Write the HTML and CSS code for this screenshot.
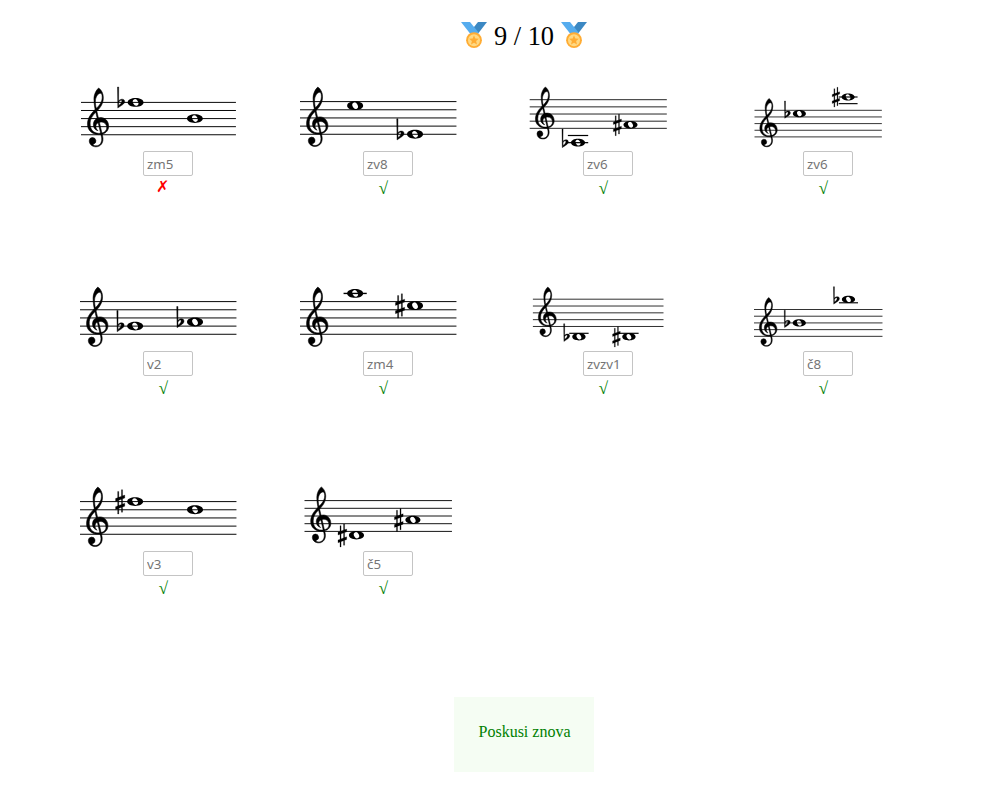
FILE: index.html
```html
<!DOCTYPE html>
<html lang="sr">
<head>
<meta charset="utf-8">
<title>Intervali</title>
<link rel="stylesheet" href="styles.css">
</head>
<body>
<svg class="defs" width="0" height="0" aria-hidden="true">
  <defs>
    <!-- One staff space is 10 units; the origin is the left end of the top line. -->
    <g id="staff">
      <path d="M0 0H191.5M0 10H191.5M0 20H191.5M0 30H191.5M0 40H191.5" fill="none" stroke="#000" stroke-width="1.2"/>
      <path transform="translate(0 -.5)" stroke="#000" stroke-width=".7" d="M21.8 -17.3C25.5 -15 27.6 -10 27.6 -5.5C27.6 3 23 8 18.8 12.2C14 17 11.3 21 11.3 27C11.3 34 15.5 38.8 22 38.8C28 38.8 31.8 36 31.8 31.8C31.8 27.5 29 24.8 25 24.8C21.2 24.8 18.8 26.8 18.4 29.5C18.1 31.8 19 33.6 21 35.5C17.5 34.6 15.3 31.8 15.3 28C15.3 23 19 19.2 24.5 19.2C30 19.2 34.2 24 34.2 30C34.2 36 29.5 40.3 22 40.3C14 40.3 8 35 8 27.5C8 19 13.5 13.5 18 8.8C23 4 26.2 0 26.2 -6C26.2 -9 25.4 -10.8 24 -10.8C21 -10.8 17.8 -6 17.8 -1C17.8 3 18.3 5 18.8 8L26.9 43C28.3 50 24.5 55.4 18.5 55.4C13.5 55.4 10.2 52 10.2 48A4.1 4.1 0 1 1 15.5 52C14.5 52.6 15 54.2 18.5 54.2C23.5 54.2 26.6 49.5 25.4 43.5L17.4 9C16.5 5 16 0 16 -4C16 -9 18.5 -14.5 21.8 -17.3Z"/>
    </g>
    <path id="note" fill-rule="evenodd" d="M-9.8 0C-9.8 -3.2 -5.3 -5.4 0 -5.4S9.8 -3.2 9.8 0S5.3 5.4 0 5.4S-9.8 3.2 -9.8 0ZM-2.1 -3.7A4.25 3.1 60 1 0 2.1 3.7A4.25 3.1 60 1 0 -2.1 -3.7Z"/>
    <path id="flat" fill-rule="evenodd" stroke="#000" stroke-width=".5" d="M-22.4 -19H-20.9L-21 -2C-19 -4.4 -13.5 -5.2 -13.5 -1C-13.5 2.4 -19 4.5 -22 7ZM-20.9 0V4C-19 2.4 -17 .6 -17 -1.4C-17 -3.6 -19.7 -2.4 -20.9 0Z"/>
    <path id="sharp" stroke="#000" stroke-width=".3" d="M-21.4 -12.5H-20V15.2H-21.4ZM-16.8 -14.6H-15.4V13H-16.8ZM-24 -3.8L-12.7 -8V-4.4L-24 -.2ZM-24 6.2L-12.7 2V5.6L-24 9.8Z"/>
    <path id="ledger" d="M-14.2 0H14.2" stroke="#000" stroke-width="1.7"/>
    <g id="medal">
      <path fill="#3b88c3" d="M26 0H17L9 10L16 13Z"/>
      <path fill="#55acee" d="M0 0H9L18 11L11 14Z"/>
      <circle cx="13" cy="18.2" r="7.9" fill="#ffac33"/>
      <circle cx="13" cy="18.2" r="6" fill="#ffd983"/>
      <path fill="#ffac33" d="M13 13.2L14.3 16.6L17.9 16.8L15.1 19.1L16 22.6L13 20.7L10 22.6L10.9 19.1L8.1 16.8L11.7 16.6Z"/>
    </g>
  </defs>
</svg>

<h1 class="result">
  <svg class="medal" viewBox="0 0 26 27"><use href="#medal"/></svg>
  <span class="points">9 / 10</span>
  <svg class="medal" viewBox="0 0 26 27"><use href="#medal"/></svg>
</h1>

<main class="grid">
  <section class="task">
    <svg class="score" viewBox="0 0 160 65"><g transform="translate(3 16.4) scale(.809)"><use href="#staff"/><use href="#flat" x="67.5"/><use href="#note" x="67.5"/><use href="#note" x="140.8" y="20"/></g></svg>
    <input class="answer" placeholder="zm5"><span class="mark wrong">✗</span>
  </section>
  <section class="task">
    <svg class="score" viewBox="0 0 160 65"><g transform="translate(2 15.6) scale(.817)"><use href="#staff"/><use href="#note" x="67.5" y="5"/><use href="#flat" x="140.8" y="40"/><use href="#note" x="140.8" y="40"/></g></svg>
    <input class="answer" placeholder="zv8"><span class="mark">√</span>
  </section>
  <section class="task">
    <svg class="score" viewBox="0 0 160 65"><g transform="translate(11.7 13.7) scale(.716)"><use href="#staff"/><use href="#ledger" x="67.5" y="50"/><use href="#ledger" x="67.5" y="60"/><use href="#flat" x="67.5" y="60"/><use href="#note" x="67.5" y="60"/><use href="#sharp" x="140.8" y="35"/><use href="#note" x="140.8" y="35"/></g></svg>
    <input class="answer" placeholder="zv6"><span class="mark">√</span>
  </section>
  <section class="task">
    <svg class="score" viewBox="0 0 160 65"><g transform="translate(16.5 24.3) scale(.665)"><use href="#staff"/><use href="#flat" x="67.5" y="5"/><use href="#note" x="67.5" y="5"/><use href="#ledger" x="140.8" y="-10"/><use href="#ledger" x="140.8" y="-20"/><use href="#sharp" x="140.8" y="-20"/><use href="#note" x="140.8" y="-20"/></g></svg>
    <input class="answer" placeholder="zv6"><span class="mark">√</span>
  </section>
  <section class="task">
    <svg class="score" viewBox="0 0 160 65"><g transform="translate(2 15.6) scale(.817)"><use href="#staff"/><use href="#flat" x="67.5" y="30"/><use href="#note" x="67.5" y="30"/><use href="#flat" x="140.8" y="25"/><use href="#note" x="140.8" y="25"/></g></svg>
    <input class="answer" placeholder="v2"><span class="mark">√</span>
  </section>
  <section class="task">
    <svg class="score" viewBox="0 0 160 65"><g transform="translate(2 15.6) scale(.817)"><use href="#staff"/><use href="#ledger" x="67.5" y="-10"/><use href="#note" x="67.5" y="-10"/><use href="#sharp" x="140.8" y="5"/><use href="#note" x="140.8" y="5"/></g></svg>
    <input class="answer" placeholder="zm4"><span class="mark">√</span>
  </section>
  <section class="task">
    <svg class="score" viewBox="0 0 160 65"><g transform="translate(14.9 13.2) scale(.682)"><use href="#staff"/><use href="#ledger" x="67.5" y="50"/><use href="#flat" x="67.5" y="55"/><use href="#note" x="67.5" y="55"/><use href="#ledger" x="140.8" y="50"/><use href="#sharp" x="140.8" y="55"/><use href="#note" x="140.8" y="55"/></g></svg>
    <input class="answer" placeholder="zvzv1"><span class="mark">√</span>
  </section>
  <section class="task">
    <svg class="score" viewBox="0 0 160 65"><g transform="translate(16 23.5) scale(.671)"><use href="#staff"/><use href="#flat" x="67.5" y="20"/><use href="#note" x="67.5" y="20"/><use href="#ledger" x="140.8" y="-10"/><use href="#flat" x="140.8" y="-15"/><use href="#note" x="140.8" y="-15"/></g></svg>
    <input class="answer" placeholder="č8"><span class="mark">√</span>
  </section>
  <section class="task">
    <svg class="score" viewBox="0 0 160 65"><g transform="translate(2 15.6) scale(.817)"><use href="#staff"/><use href="#sharp" x="67.5"/><use href="#note" x="67.5"/><use href="#note" x="140.8" y="10"/></g></svg>
    <input class="answer" placeholder="v3"><span class="mark">√</span>
  </section>
  <section class="task">
    <svg class="score" viewBox="0 0 160 65"><g transform="translate(6.5 14.6) scale(.77)"><use href="#staff"/><use href="#sharp" x="67.5" y="45"/><use href="#note" x="67.5" y="45"/><use href="#sharp" x="140.8" y="25"/><use href="#note" x="140.8" y="25"/></g></svg>
    <input class="answer" placeholder="č5"><span class="mark">√</span>
  </section>
</main>

<button class="again" type="button">Poskusi znova</button>
</body>
</html>
```
FILE: styles.css
```css
* {
  box-sizing: border-box;
}

body {
  margin: 0;
  padding-left: 62px;
  width: 986px;
  height: 800px;
  display: flex;
  flex-direction: column;
  align-items: center;
  background: #fff;
  font-family: "Liberation Serif", serif;
  font-size: 16px;
  overflow: hidden;
}

.defs {
  position: absolute;
}

.result {
  display: flex;
  align-items: center;
  gap: 7px;
  margin: 22px 0 0;
  height: 30px;
  font-size: 26.4px;
  line-height: 30px;
  font-weight: normal;
}

.medal {
  width: 26px;
  height: 27px;
  margin-bottom: 3px;
}

.points {
  margin-bottom: 2px;
}

.grid {
  display: grid;
  grid-template-columns: repeat(4, 220px);
  grid-auto-rows: 200px;
  align-self: flex-start;
  margin: 34px 0 0 -14px;
}

.task {
  display: flex;
  flex-direction: column;
  align-items: center;
}

.score {
  width: 160px;
  height: 65px;
  overflow: visible;
}

.answer {
  width: 50px;
  height: 25px;
  margin-left: 20px;
  padding: 1px 3px;
  border: 1px solid #c4c4c4;
  border-radius: 2px;
  font-family: "Noto Sans", sans-serif;
  font-size: 13.333px;
}

.answer::placeholder {
  color: #757575;
  opacity: 1;
}

.mark {
  margin-left: 11px;
  color: green;
  font-size: 17px;
  line-height: 25px;
}

.wrong {
  margin-left: 8px;
  font-size: 16px;
  line-height: 22px;
  color: red;
}

.again {
  width: 140px;
  height: 75px;
  margin-top: 11px;
  padding: 0 0 5px 1px;
  border: 0;
  background: #f5fdf3;
  color: green;
  font: inherit;
}
```
